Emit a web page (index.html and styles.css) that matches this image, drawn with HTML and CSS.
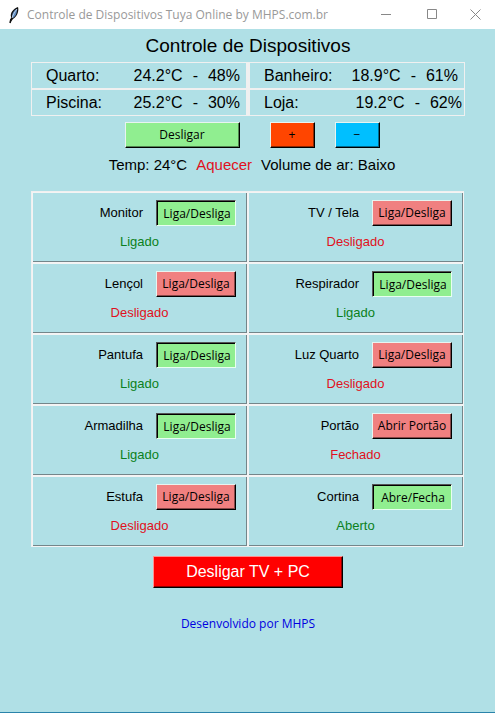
FILE: index.html
```html
<!DOCTYPE html>
<html lang="pt-BR">
<head>
<meta charset="utf-8">
<meta name="viewport" content="width=device-width, initial-scale=1">
<title>Controle de Dispositivos Tuya Online by MHPS.com.br</title>
<link rel="stylesheet" href="styles.css">
</head>
<body>
<header class="titlebar">
  <svg class="feather" viewBox="0 0 16 18" aria-hidden="true">
    <path d="M4 17 5 11C4 7 7 3 12 1c1 3 0 9-5 12z" fill="#111"/>
    <path d="M6 11c0-4 2-7 5-8 0 4-1 7-4 9z" fill="#5f8cc0"/>
    <path d="M6 12C7 9 8 7 11 3" fill="none" stroke="#b8cce6" stroke-width="1"/>
    <path d="M4 17 5 13" stroke="#111" stroke-width="1.5"/>
  </svg>
  <span class="caption">Controle de Dispositivos Tuya Online by MHPS.com.br</span>
  <div class="window-buttons">
    <button type="button" aria-label="Minimizar"><svg viewBox="0 0 11 11"><path d="M0 5.5h10"/></svg></button>
    <button type="button" aria-label="Maximizar"><svg viewBox="0 0 11 11"><path d="M.5 .5h9v9h-9z"/></svg></button>
    <button type="button" aria-label="Fechar"><svg viewBox="0 0 11 11"><path d="M.5 .5l10 10M10.500 .5l-10 10"/></svg></button>
  </div>
</header>
<main>
  <h1>Controle de Dispositivos</h1>
  <table class="sensors">
    <tr>
      <td><div class="reading"><span class="room">Quarto:</span><span>24.2°C</span><span>-</span><span>48%</span></div></td>
      <td><div class="reading"><span class="room">Banheiro:</span><span>18.9°C</span><span>-</span><span>61%</span></div></td>
    </tr>
    <tr>
      <td><div class="reading"><span class="room">Piscina:</span><span>25.2°C</span><span>-</span><span>30%</span></div></td>
      <td><div class="reading wide"><span class="room">Loja:</span><span>19.2°C</span><span>-</span><span>62%</span></div></td>
    </tr>
  </table>
  <div class="climate">
    <button type="button" class="btn power on">Desligar</button>
    <button type="button" class="btn step warmer">+</button>
    <button type="button" class="btn step cooler">−</button>
  </div>
  <p class="climate-status"><span>Temp: 24°C</span><span class="heat">Aquecer</span><span>Volume de ar: Baixo</span></p>
  <div class="devices">
    <section class="device"><span class="name">Monitor</span><button type="button" class="btn on pressed">Liga/Desliga</button><span class="state ok">Ligado</span></section>
    <section class="device"><span class="name">TV / Tela</span><button type="button" class="btn off">Liga/Desliga</button><span class="state bad">Desligado</span></section>
    <section class="device"><span class="name">Lençol</span><button type="button" class="btn off">Liga/Desliga</button><span class="state bad">Desligado</span></section>
    <section class="device"><span class="name">Respirador</span><button type="button" class="btn on pressed">Liga/Desliga</button><span class="state ok">Ligado</span></section>
    <section class="device"><span class="name">Pantufa</span><button type="button" class="btn on pressed">Liga/Desliga</button><span class="state ok">Ligado</span></section>
    <section class="device"><span class="name">Luz Quarto</span><button type="button" class="btn off">Liga/Desliga</button><span class="state bad">Desligado</span></section>
    <section class="device"><span class="name">Armadilha</span><button type="button" class="btn on pressed">Liga/Desliga</button><span class="state ok">Ligado</span></section>
    <section class="device"><span class="name">Portão</span><button type="button" class="btn off">Abrir Portão</button><span class="state bad">Fechado</span></section>
    <section class="device"><span class="name">Estufa</span><button type="button" class="btn off">Liga/Desliga</button><span class="state bad">Desligado</span></section>
    <section class="device"><span class="name">Cortina</span><button type="button" class="btn on pressed">Abre/Fecha</button><span class="state ok">Aberto</span></section>
  </div>
  <button type="button" class="btn all-off">Desligar TV + PC</button>
  <p class="credit">Desenvolvido por MHPS</p>
</main>
</body>
</html>
```

FILE: styles.css
```css
* { box-sizing: border-box; }

body {
  margin: 0;
  min-height: 100vh;
  display: flex;
  flex-direction: column;
  background: #b0e0e6;
  border-bottom: 1px solid #2a83aa;
  color: #000;
  font-family: "Liberation Sans", Arial, sans-serif;
}

.titlebar {
  display: flex;
  align-items: center;
  height: 29px;
  padding-left: 6px;
  background: #fff;
}

.feather { width: 16px; height: 18px; }

.caption {
  flex: 1;
  margin-left: 5px;
  color: #999;
  font: 12px/16px "Open Sans", sans-serif;
  white-space: nowrap;
}

.window-buttons { display: flex; }

.window-buttons button {
  width: 46px;
  height: 26px;
  padding: 0;
  border: 0;
  background: none;
  display: grid;
  place-items: center;
}

.window-buttons button:last-child { width: 40px; }

.window-buttons svg {
  width: 11px;
  height: 11px;
  fill: none;
  stroke: #888;
}

main {
  display: flex;
  flex-direction: column;
  align-items: center;
  padding: 0 30px 0 31px;
}

h1 {
  margin: 6px 0 5px;
  font-size: 19px;
  line-height: 22px;
  font-weight: normal;
}

.sensors {
  width: 100%;
  border-collapse: collapse;
  table-layout: fixed;
  border: 1px solid #f0f0f0;
  font-size: 16px;
  line-height: 25px;
}

.sensors td {
  padding: 0;
  border: 1px solid #f0f0f0;
}

.sensors tr + tr td { border-top-width: 2px; }

.sensors td + td { border-left-width: 4px; }

.reading {
  display: flex;
  gap: 10px;
  padding: 0 6px 0 14px;
}

.room { flex: 1; }

.reading.wide { padding-right: 2px; }

.btn {
  height: 26px;
  padding: 0;
  border: 1px solid;
  border-color: #e8f4f0 #000 #000 #e8f4f0;
  box-shadow: inset -1px -1px #00000070;
  color: #000;
  font: 12px/16px "Open Sans", sans-serif;
}

.on { background: #90ee90; }
.off { background: #f08080; }

.pressed {
  border-color: #555 #e8fff0 #e8fff0 #555;
  box-shadow: inset 1px 1px #000;
  padding: 2px 0 0 2px;
}

.climate {
  display: flex;
  margin-top: 6px;
  margin-left: 8px;
}

.power { width: 115px; }
.step { width: 45px; }
.warmer { background: #ff4500; margin-left: 30px; }
.cooler { background: #00bfff; margin-left: 20px; }

.climate-status {
  display: flex;
  gap: 9px;
  margin: 8px 0 0 8px;
  font-size: 15px;
  line-height: 18px;
}

.heat { color: #e01020; }

.devices {
  display: grid;
  grid-template-columns: 1fr 1fr;
  align-self: stretch;
  margin: 17px 1px 0 0;
  border: 1px solid #f0f0f0;
  border-width: 1px 0 0 1px;
}

.device {
  display: grid;
  grid-template-columns: 1fr 80px;
  column-gap: 13px;
  row-gap: 8px;
  align-items: center;
  height: 71px;
  padding: 7px 11px 10px 10px;
  align-content: start;
  border: 1px solid #f4f4f4;
  box-shadow: inset -1px -1px #74868a;
}

.name {
  text-align: right;
  font-size: 13px;
  line-height: 16px;
}

.state {
  grid-column: 1 / -1;
  text-align: center;
  font-size: 13px;
  line-height: 16px;
}

.ok { color: #0b8020; }
.bad { color: #e01020; }

.all-off {
  width: 190px;
  height: 32px;
  margin-top: 9px;
  background: #f00;
  border-color: #ff9090 #000 #000 #ff9090;
  color: #fff;
  font: 16px/20px "Liberation Sans", Arial, sans-serif;
}

.credit {
  margin: 28px 0 0;
  color: #0000e0;
  font: 12px/16px "Open Sans", sans-serif;
}
```
